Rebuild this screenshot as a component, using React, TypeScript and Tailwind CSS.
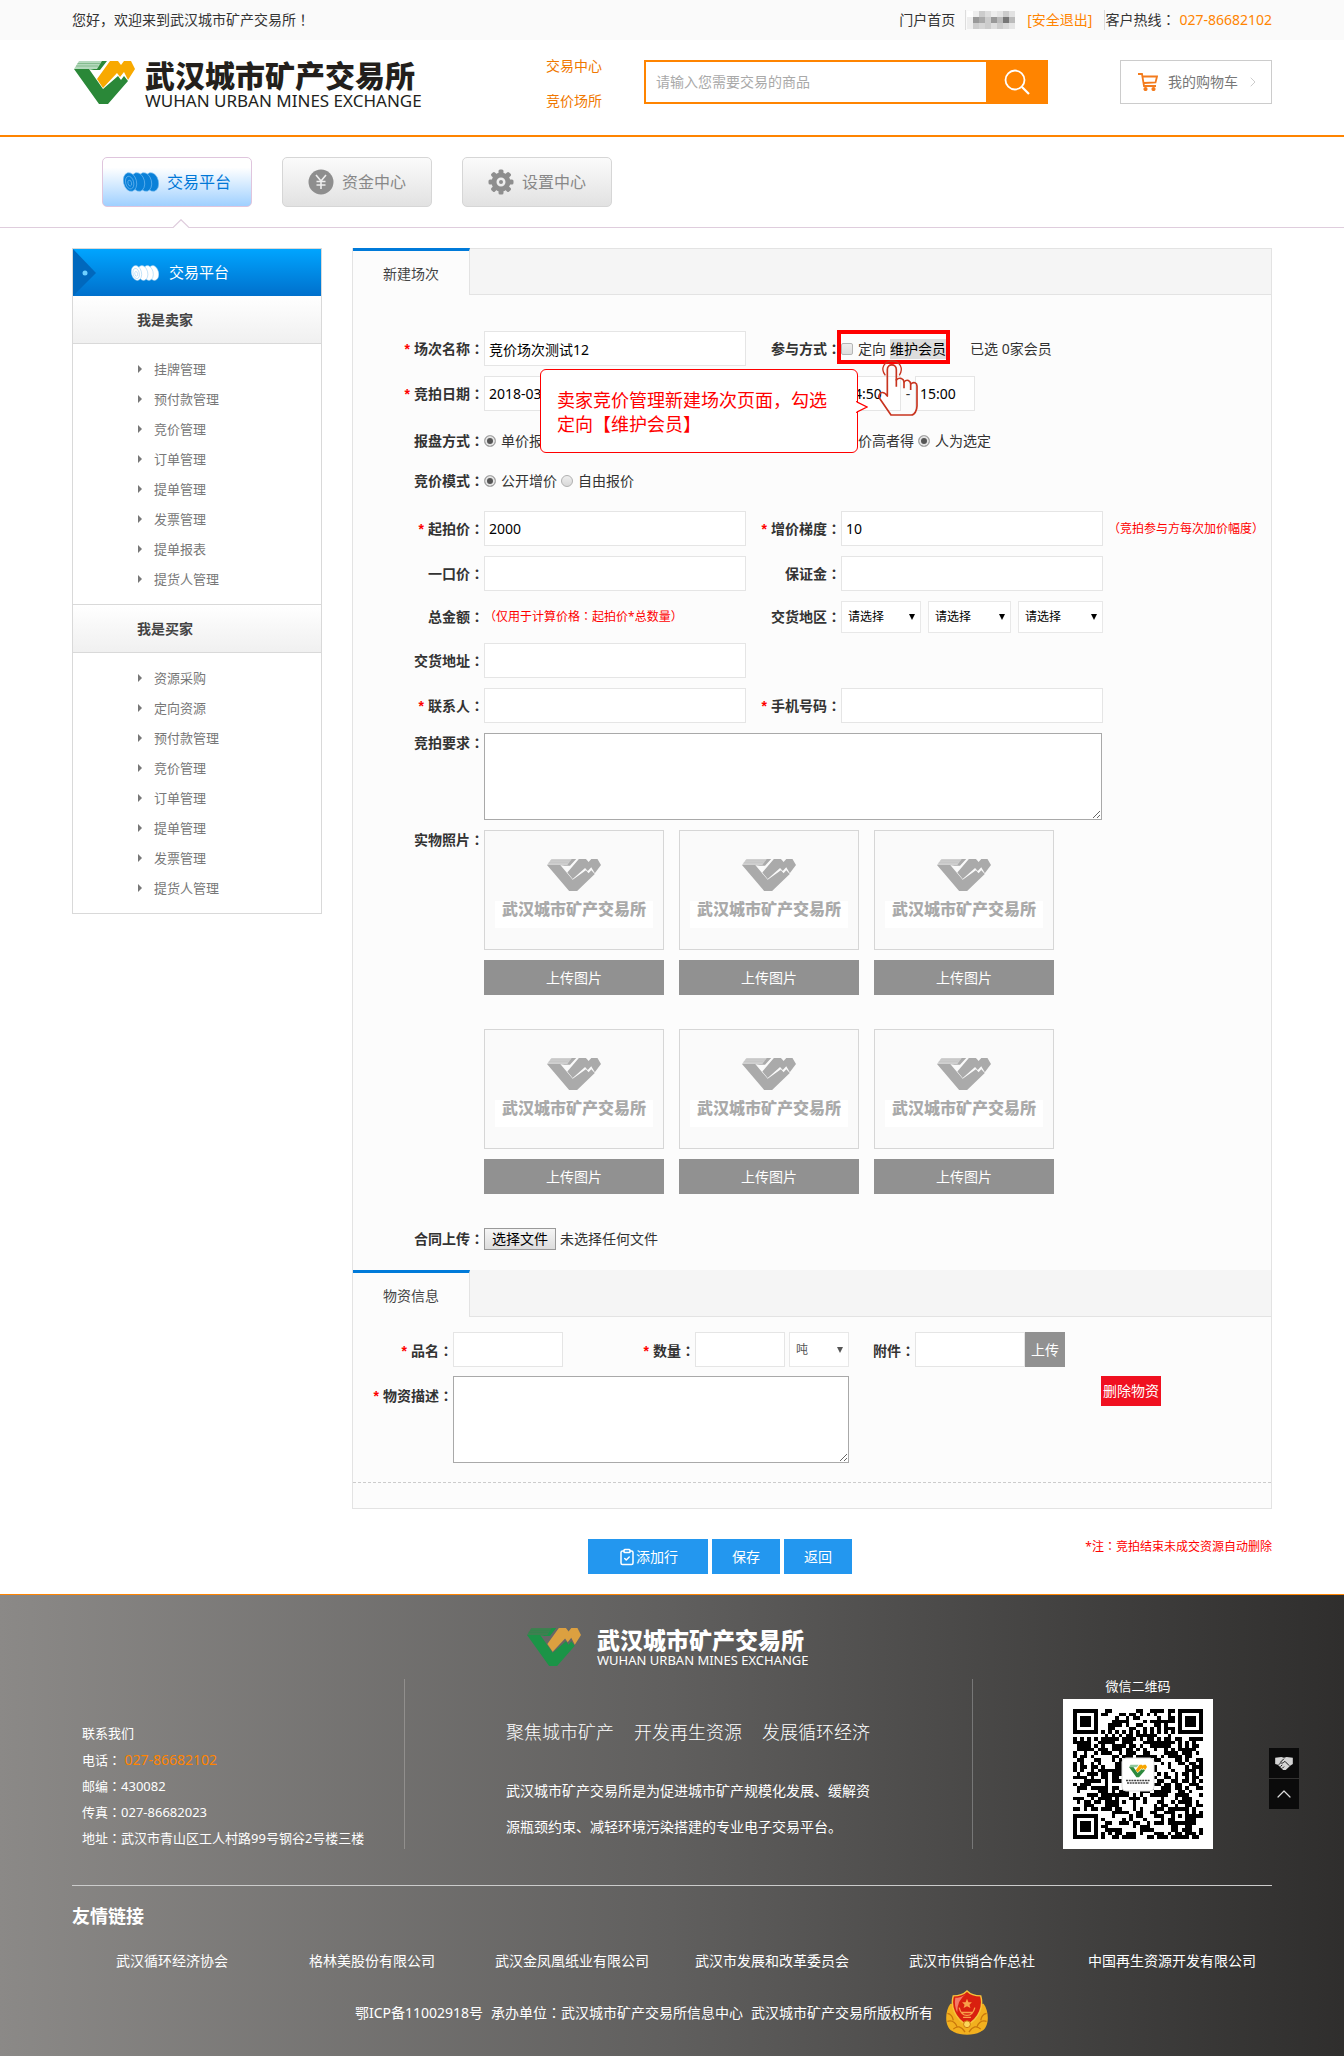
import { useState } from 'react';
import type { ReactNode } from 'react';
import { ChevronRight, ChevronUp, ClipboardCheck } from 'lucide-react';

const SELLER_MENU = ['挂牌管理', '预付款管理', '竞价管理', '订单管理', '提单管理', '发票管理', '提单报表', '提货人管理'];
const BUYER_MENU = ['资源采购', '定向资源', '预付款管理', '竞价管理', '订单管理', '提单管理', '发票管理', '提货人管理'];
const FRIEND_LINKS = [
    '武汉循环经济协会',
    '格林美股份有限公司',
    '武汉金凤凰纸业有限公司',
    '武汉市发展和改革委员会',
    '武汉市供销合作总社',
    '中国再生资源开发有限公司',
];

const inputClass = 'h-[35px] w-full border border-[#e5e5e5] bg-white px-1 text-sm text-black outline-none';
const rowClass = 'mb-2.5 grid grid-cols-[131px_262px_95px_262px_1fr] items-center';
const radioClass =
    'size-3 shrink-0 appearance-none rounded-full border border-[#b0b0b0] bg-linear-to-b from-[#eee] to-[#d8d8d8] checked:bg-none checked:bg-[#555] checked:shadow-[inset_0_0_0_2px_#e4e4e4]';

/* ---------- drawings ---------- */

const LogoMark = ({ className, green, light, gold }: { className: string; green: string; light: string; gold: string }) => (
    <svg viewBox="0 0 61 43" preserveAspectRatio="none" className={className} aria-hidden="true">
        <path d="M0 8H15L29 28L44 15L47 19L50 15L54 20L34 43H25Z" fill={green} />
        <path d="M26 0H33L26 9H14L20 8Z" fill={green} />
        <path d="M5 0H28L23 8H0Z" fill={light} />
        <path d="M3.500 2.500H26M2 5H24" stroke={green} strokeWidth="0.700" opacity="0.500" />
        <path d="M36 0H44L47 4L50 0H57L61 8L54 19L50 11L46 16L43 12L29 27L23 18Z" fill={gold} />
    </svg>
);

const CoilIcon = ({ className, color, line }: { className: string; color: string; line: string }) => (
    <svg viewBox="0 0 36 20" preserveAspectRatio="none" className={className} aria-hidden="true">
        {[29, 22, 15, 7].map((x) => (
            <g key={x} transform={`rotate(-14 ${x} 10)`}>
                <ellipse cx={x} cy="10" rx="6.500" ry="9.500" fill={color} stroke={line} strokeWidth="0.600" />
            </g>
        ))}
        <g transform="rotate(-14 7 10)" fill="none" stroke={line} strokeWidth="0.600">
            <ellipse cx="6.500" cy="10.500" rx="4" ry="6.500" />
            <ellipse cx="6.500" cy="11" rx="1.800" ry="3" />
        </g>
    </svg>
);

const GearIcon = () => (
    <svg viewBox="0 0 26 26" className="size-6.5" aria-hidden="true">
        {[0, 45, 90, 135, 180, 225, 270, 315].map((a) => (
            <rect key={a} x="10.500" y="0.500" width="5" height="6" rx="1.500" fill="#8e8e8e" transform={`rotate(${a} 13 13)`} />
        ))}
        <circle cx="13" cy="13" r="7" fill="none" stroke="#8e8e8e" strokeWidth="5" />
        <circle cx="13" cy="13" r="2" fill="#8e8e8e" />
    </svg>
);

const YuanIcon = () => (
    <svg viewBox="0 0 26 26" className="size-6.5" aria-hidden="true">
        <circle cx="13" cy="13" r="12.500" fill="#8e8e8e" />
        <path d="M8 6L13 12L18 6M13 12V20M8.500 12.500H17.500M8.500 16H17.500" fill="none" stroke="#eee" strokeWidth="1.600" />
    </svg>
);

const CartIcon = () => (
    <svg viewBox="0 0 20 18" className="h-[18px] w-5" fill="none" stroke="#f37b1d" strokeWidth="1.800" aria-hidden="true">
        <path d="M0 1H4L6 13H18M4.500 3.500H19L17.500 9.500L6 10" />
        <circle cx="7.500" cy="16" r="1.200" fill="#f37b1d" />
        <circle cx="15.500" cy="16" r="1.200" fill="#f37b1d" />
    </svg>
);

const HandIcon = ({ className }: { className: string }) => (
    <svg viewBox="232 180 126 171" className={className} fill="none" stroke="#c8341f" strokeWidth="5" aria-hidden="true">
        <path
            d="M263 288V209C263 190 290 190 290 209V240C300 230 312 236 313 246C322 236 332 242 333 252C342 244 352 248 352 258V318C352 330 345 345 335 345H274L237 291C240 275 252 272 263 288Z"
            strokeLinejoin="round"
        />
        <path d="M290 238V260M313 246V265M333 252V270" />
        <path d="M257 226C240 205 255 183 277 183C300 183 313 205 299 226" strokeWidth="4" />
    </svg>
);

const HandshakeIcon = () => (
    <svg viewBox="0 0 20 17" className="h-[15px] w-[18px]" aria-hidden="true">
        <path d="M0 2L7 1L10 2L13 1L20 2V9L17 11L12 16L9 16L3 10L0 9Z" fill="#d4d4d4" />
        <path d="M10 3L6 7C7 9 9 8 11 6L16 11M4 10L6 8M6 12L8 10M8 14L10 12" fill="none" stroke="#111" strokeWidth="1.100" />
    </svg>
);

const QR_SIZE = 37;

const isFinder = (x: number, y: number) => (x < 8 && y < 8) || (x > 28 && y < 8) || (x < 8 && y > 28);

const buildQr = () => {
    let seed = 20180315;
    let d = '';
    for (let y = 0; y < QR_SIZE; y++) {
        for (let x = 0; x < QR_SIZE; x++) {
            seed = (seed * 1103515245 + 12345) % 2147483648;
            const ring = Math.max(Math.abs(x - 30), Math.abs(y - 30));
            const timing = x === 6 || y === 6;
            let dark = seed / 2147483648 > 0.5;
            if (timing) dark = (x + y) % 2 === 0;
            if (ring <= 2) dark = ring !== 1;
            if (dark && !isFinder(x, y)) d += `M${x} ${y}h1v1h-1z`;
        }
    }
    return d;
};

const QrCode = () => (
    <svg viewBox="0 0 150 150" className="size-[150px]" role="img" aria-label="微信二维码">
        <rect width="150" height="150" fill="#fff" />
        <g transform="translate(10 10) scale(3.510)" shapeRendering="crispEdges">
            <path d={buildQr()} />
            {[[0, 0], [30, 0], [0, 30]].map(([x, y]) => (
                <g key={`${x}-${y}`}>
                    <rect x={x} y={y} width="7" height="7" />
                    <rect x={x + 1} y={y + 1} width="5" height="5" fill="#fff" />
                    <rect x={x + 2} y={y + 2} width="3" height="3" />
                </g>
            ))}
        </g>
        <rect x="59" y="59" width="32" height="33" rx="4" fill="#fff" stroke="#ddd" />
        <svg x="66" y="65" width="18" height="14" viewBox="0 0 61 43">
            <path d="M0 8H15L29 28L44 15L47 19L50 15L54 20L34 43H25Z" fill="#2d8a3e" />
            <path d="M5 0H33L26 9H0Z" fill="#8fc79c" />
            <path d="M36 0H44L47 4L50 0H57L61 8L54 19L50 11L46 16L43 12L29 27L23 18Z" fill="#f7a600" />
        </svg>
        <path d="M63 81.500H87M64 84H86" stroke="#444" strokeWidth="1.500" strokeDasharray="2 0.700" />
    </svg>
);

const PoliceBadge = () => (
    <svg viewBox="0 0 44 46" className="h-[45px] w-11" aria-hidden="true">
        <path d="M5 14C-1 22 -1 38 7 42C14 47 30 47 37 42C45 38 45 22 39 14Z" fill="#f2b01e" />
        <path d="M2 24Q7 25 8 31M2 32Q9 30 12 38M42 24Q37 25 36 31M42 32Q35 30 32 38M8 40Q14 34 20 43M36 40Q30 34 24 43" fill="none" stroke="#c9770b" strokeWidth="1.300" />
        <path d="M22 1C18 5 12 6 8 6C5 16 9 29 22 36C35 29 39 16 36 6C32 6 26 5 22 1Z" fill="#d9200f" stroke="#f6c33c" strokeWidth="1.500" />
        <path d="M21 4C18 7 13 8 10 8C9 14 10 19 12 23Q12 10 21 4Z" fill="#f47a66" />
        <path d="M22 9L23.500 12.500H27L24.500 15L25.500 18.500L22 16.500L18.500 18.500L19.500 15L17 12.500H20.500Z" fill="#f9a04a" />
        <path d="M14 18Q16 26 22 26Q28 26 30 18M16 23H28M18 28H26" fill="none" stroke="#f9a04a" strokeWidth="1.300" />
        <circle cx="22" cy="35" r="3.500" fill="#fbd75a" stroke="#c9770b" />
    </svg>
);

const MOSAIC = ['#fff', '#eee', '#ccc', '#ddd', '#eee', '#e5e5e5', '#ccc', '#e2e2e2', '#eee', '#999', '#aaa', '#ccc', '#999', '#bbb', '#777', '#bbb', '#eee', '#ccc', '#d5d5d5', '#ccc', '#ddd', '#ccc', '#d8d8d8', '#e5e5e5'];

const MaskedName = () => (
    <svg viewBox="0 0 48 18" className="h-[18px] w-12" aria-hidden="true" shapeRendering="crispEdges">
        {MOSAIC.map((c, i) => (
            <rect key={i} x={(i % 8) * 6} y={Math.floor(i / 8) * 6} width="6" height="6" fill={c} />
        ))}
    </svg>
);

/* ---------- small pieces ---------- */

// full-width punctuation that sits in the middle of its cell
const Mark = ({ children }: { children: string }) => (
    <span className="font-[family-name:'Noto_Sans_CJK_TC',sans-serif] leading-none">{children}</span>
);

const Label = ({ htmlFor, required, children, className = '' }: { htmlFor?: string; required?: boolean; children: ReactNode; className?: string }) => (
    <label htmlFor={htmlFor} className={`flex justify-end text-sm leading-5 font-bold whitespace-nowrap text-[#333] ${className}`}>
        {required && <span className="mr-1 font-[family-name:'Liberation_Sans',sans-serif] text-[#f00]">*</span>}
        <span>
            {children}
            <Mark>：</Mark>
        </span>
    </label>
);

const Select = ({ label, options, className }: { label: string; options: string[]; className: string }) => (
    <span className={`relative block ${className}`}>
        <select aria-label={label} className="h-full w-full appearance-none border border-[#e8e8e8] bg-white pl-1.5 text-xs outline-none">
            {options.map((o) => (
                <option key={o}>{o}</option>
            ))}
        </select>
        <svg viewBox="0 0 6 6" className="pointer-events-none absolute top-1/2 right-1.5 size-1.5 -translate-y-1/2" aria-hidden="true">
            <path d="M0 0H6L3 6Z" fill="currentColor" />
        </svg>
    </span>
);

const Radio = ({ name, label, checked }: { name: string; label: string; checked?: boolean }) => (
    <label className="mr-1 flex items-center gap-[5px] text-sm whitespace-nowrap">
        <input type="radio" name={name} defaultChecked={checked} className={radioClass} />
        {label}
    </label>
);

const SideMenu = ({ title, items }: { title: string; items: string[] }) => (
    <section className="border-b border-[#d9d9d9]">
        <h3 className="border-b border-[#d9d9d9] bg-linear-to-b from-white to-[#f0f0f0] pl-16 text-sm leading-[47px] font-bold text-[#444]">{title}</h3>
        <ul className="py-2.5">
            {items.map((item) => (
                <li key={item}>
                    <a href="#" className="flex h-[30px] items-center gap-3 pl-[65px] text-[13px] text-[#777]">
                        <svg viewBox="0 0 4 8" className="h-2 w-1" aria-hidden="true">
                            <path d="M0 0L4 4L0 8Z" fill="#777" />
                        </svg>
                        {item}
                    </a>
                </li>
            ))}
        </ul>
    </section>
);

const SectionTab = ({ title, className = '' }: { title: string; className?: string }) => (
    <div className="flex h-[47px]">
        <h2 className="w-[117px] border-t-[3px] border-r border-t-[#007ad9] border-r-[#e3e3e3] pl-[30px] text-sm leading-[46px] text-[#444]">{title}</h2>
        <div className={`flex-1 border-b border-[#e3e3e3] bg-[#f5f5f5] ${className}`} />
    </div>
);

const PhotoSlot = () => (
    <div className="w-[180px]">
        <div className="flex h-[120px] flex-col items-center border border-[#d6d6d6] bg-[#fafafa] pt-7">
            <LogoMark className="h-8 w-[54px]" green="#aaa" light="#d0d0d0" gold="#aaa" />
            <div className="mt-2.5 h-[27px] w-[158px] bg-white text-center text-base leading-4 font-black text-[#aaa]">武汉城市矿产交易所</div>
        </div>
        <button type="button" className="mt-2.5 h-[35px] w-full bg-[#919191] text-sm text-white">
            上传图片
        </button>
    </div>
);

const Field = ({ id, value }: { id: string; value?: string }) => <input id={id} name={id} type="text" defaultValue={value} className={inputClass} />;

/* ---------- page parts ---------- */

const Header = () => (
    <header>
        <div className="bg-[#fafafa]">
            <div className="mx-auto flex h-10 max-w-[1200px] items-center text-sm text-[#333]">
                <span className="leading-5">
                    您好，欢迎来到武汉城市矿产交易所<Mark>！</Mark>
                </span>
                <a href="#" className="mr-2.5 ml-auto">门户首页</a>
                <span className="flex h-5 items-center border-l border-[#ddd] pl-px">
                    <MaskedName />
                </span>
                <a href="#" className="mx-3 text-[#ff8400]">[安全退出]</a>
                <span className="mr-1 border-l border-[#ddd] leading-5">
                    客户热线<Mark>：</Mark>
                </span>
                <span className="text-[#ff8400]">027-86682102</span>
            </div>
        </div>
        <div className="border-b-2 border-[#ff8400]">
            <div className="mx-auto flex h-[95px] max-w-[1200px] items-start pt-5">
                <a href="#" className="ml-0.5 flex w-[472px] shrink-0 items-start gap-2.5">
                    <LogoMark className="mt-px h-[43px] w-[61px]" green="#2a8838" light="#b5d9bd" gold="#f8a900" />
                    <span className="block text-[#231f1c]">
                        <span className="block text-[30px] leading-8 font-black">武汉城市矿产交易所</span>
                        <span className="block text-[17px] leading-[18px]">WUHAN URBAN MINES EXCHANGE</span>
                    </span>
                </a>
                <nav className="flex w-[98px] shrink-0 flex-col gap-[11px] text-sm leading-6 text-[#f07800]">
                    <a href="#" className="-mt-1.5">交易中心</a>
                    <a href="#">竞价场所</a>
                </nav>
                <form className="flex h-11 w-[404px]" onSubmit={(e) => e.preventDefault()}>
                    <input
                        type="text"
                        aria-label="搜索商品"
                        placeholder="请输入您需要交易的商品"
                        className="min-w-0 flex-1 border-2 border-r-0 border-[#ff8400] px-2.5 text-sm outline-none placeholder:text-[#a9a9a9]"
                    />
                    <button type="submit" aria-label="搜索" className="flex w-[62px] items-center justify-center bg-[#ff8400]">
                        <svg viewBox="0 0 26 26" className="size-6.5" fill="none" stroke="#fff" strokeWidth="1.800" aria-hidden="true">
                            <circle cx="11" cy="11" r="9.500" />
                            <path d="M18 18L25 25" strokeWidth="2.200" />
                        </svg>
                    </button>
                </form>
                <a href="#" className="ml-auto flex h-11 w-[152px] items-center border border-[#ccc] pr-2.5 pl-[17px] text-sm text-[#777]">
                    <CartIcon />
                    <span className="ml-2.5">我的购物车</span>
                    <ChevronRight className="ml-auto size-4 text-[#ccc]" strokeWidth={1.5} />
                </a>
            </div>
        </div>
    </header>
);

const CenterTabs = () => (
    <nav className="border-b border-[#dfcddd]">
        <div className="relative mx-auto flex max-w-[1200px] gap-[30px] px-[30px] py-5 text-base">
            <a href="#" className="flex h-[50px] w-[150px] items-center gap-2 rounded-[5px] border border-[#dfc5dd] bg-linear-to-b from-white from-20% to-[#9fd0ff] pl-5 text-[#0078d7]">
                <CoilIcon className="h-5 w-9" color="#0a80d8" line="#7cc0f2" />
                交易平台
            </a>
            <a href="#" className="flex h-[50px] w-[150px] items-center gap-2 rounded-[5px] border border-[#d6d6d6] bg-linear-to-b from-[#fbfbfb] to-[#e2e2e2] pl-[25px] text-[#888]">
                <YuanIcon />
                资金中心
            </a>
            <a href="#" className="flex h-[50px] w-[150px] items-center gap-2 rounded-[5px] border border-[#d6d6d6] bg-linear-to-b from-[#fbfbfb] to-[#e2e2e2] pl-[25px] text-[#888]">
                <GearIcon />
                设置中心
            </a>
            <svg viewBox="0 0 16 9" className="absolute -bottom-px left-[101px] h-[9px] w-4" aria-hidden="true">
                <path d="M0 9L8 1L16 9Z" fill="#fff" />
                <path d="M0 8.500L8 0.700L16 8.500" fill="none" stroke="#dfcddd" strokeWidth="1.200" />
            </svg>
        </div>
    </nav>
);

const Sidebar = () => (
    <aside className="w-[250px] shrink-0 self-start border-x border-t border-[#d9d9d9]">
        <h2 className="flex h-[47px] items-center bg-linear-to-b from-[#00a5ff] to-[#0070cc] text-[15px] text-white">
            <svg viewBox="0 0 23 47" className="h-[47px] w-[23px]" aria-hidden="true">
                <path d="M0 0L23 24L0 47Z" fill="#0068bd" />
                <circle cx="12" cy="24" r="2.500" fill="#6fd0ff" />
            </svg>
            <CoilIcon className="mr-2.5 ml-[35px] h-4 w-7" color="#fff" line="#8cc8f2" />
            交易平台
        </h2>
        <SideMenu title="我是卖家" items={SELLER_MENU} />
        <SideMenu title="我是买家" items={BUYER_MENU} />
    </aside>
);

const SessionForm = () => {
    const [directed, setDirected] = useState(false);

    return (
        <div className="relative pt-9 pb-5">
            <div className={rowClass}>
                <Label htmlFor="sessionName" required>场次名称</Label>
                <Field id="sessionName" value="竞价场次测试12" />
                <Label>参与方式</Label>
                <div className="relative col-span-2 flex h-[35px] items-center text-sm">
                    <span className="pointer-events-none absolute -top-px -left-1 h-[34px] w-[113px] border-4 border-[#f00]" />
                    <label className="flex w-[49px] items-center gap-[5px]">
                        <input
                            type="checkbox"
                            checked={directed}
                            onChange={(e) => setDirected(e.target.checked)}
                            className="size-3 appearance-none rounded-[2px] border border-[#b5b5b5] bg-linear-to-b from-[#eee] to-[#ddd] checked:bg-[#888] checked:bg-none"
                        />
                        定向
                    </label>
                    <button type="button" className="h-5 w-14 bg-[#ddd] leading-5 whitespace-nowrap text-black">维护会员</button>
                    <span className="ml-6">已选 0家会员</span>
                </div>
            </div>

            <div className={rowClass}>
                <Label htmlFor="auctionDate" required>竞拍日期</Label>
                <Field id="auctionDate" value="2018-03-15" />
                <span />
                <div className="flex items-center text-sm">
                    <input type="text" aria-label="开始时间" defaultValue="14:50" className="h-[35px] w-[60px] border border-[#e5e5e5] bg-white px-1 text-black" />
                    <span className="w-3.5 text-center">-</span>
                    <input type="text" aria-label="结束时间" defaultValue="15:00" className="h-[35px] w-[60px] border border-[#e5e5e5] bg-white px-1 text-black" />
                </div>
            </div>

            <div className="grid h-10 grid-cols-[131px_262px_95px_262px_1fr] items-center">
                <Label>报盘方式</Label>
                <div className="flex">
                    <Radio name="quote" label="单价报盘" checked />
                </div>
                <span />
                <div className="flex">
                    <Radio name="winner" label="价高者得" />
                    <Radio name="winner" label="人为选定" checked />
                </div>
            </div>

            <div className="mb-2.5 grid h-10 grid-cols-[131px_1fr] items-center">
                <Label>竞价模式</Label>
                <div className="flex">
                    <Radio name="mode" label="公开增价" checked />
                    <Radio name="mode" label="自由报价" />
                </div>
            </div>

            <div className={rowClass}>
                <Label htmlFor="startPrice" required>起拍价</Label>
                <Field id="startPrice" value="2000" />
                <Label htmlFor="step" required>增价梯度</Label>
                <Field id="step" value="10" />
                <span className="pl-[5px] text-xs whitespace-nowrap text-[#f00]">（竞拍参与方每次加价幅度）</span>
            </div>

            <div className={rowClass}>
                <Label htmlFor="fixedPrice">一口价</Label>
                <Field id="fixedPrice" />
                <Label htmlFor="deposit">保证金</Label>
                <Field id="deposit" />
            </div>

            <div className={rowClass}>
                <Label>总金额</Label>
                <span className="text-xs text-[#f00]">
                    （仅用于计算价格<Mark>：</Mark>起拍价*总数量）
                </span>
                <Label>交货地区</Label>
                <div className="flex h-8 justify-between text-black">
                    <Select label="省" options={['请选择']} className="w-20" />
                    <Select label="市" options={['请选择']} className="w-[83px]" />
                    <Select label="区" options={['请选择']} className="w-[85px]" />
                </div>
            </div>

            <div className={rowClass}>
                <Label htmlFor="address">交货地址</Label>
                <Field id="address" />
            </div>

            <div className={rowClass}>
                <Label htmlFor="contact" required>联系人</Label>
                <Field id="contact" />
                <Label htmlFor="mobile" required>手机号码</Label>
                <Field id="mobile" />
            </div>

            <div className="mb-2.5 flex">
                <Label htmlFor="demand" className="w-[131px]">竞拍要求</Label>
                <textarea id="demand" className="h-[87px] w-[618px] border border-[#a9a9a9] bg-white outline-none" />
            </div>

            <div className="flex">
                <Label className="w-[131px] self-start">实物照片</Label>
                <div className="grid grid-cols-[180px_180px_180px] gap-x-[15px] gap-y-[34px]">
                    {[0, 1, 2, 3, 4, 5].map((n) => (
                        <PhotoSlot key={n} />
                    ))}
                </div>
            </div>

            <div className="mt-[34px] flex items-center text-sm">
                <Label htmlFor="contract" className="w-[131px]">合同上传</Label>
                <input id="contract" type="file" className="hidden" />
                <label htmlFor="contract" className="h-[22px] w-[72px] border border-[#999] bg-linear-to-b from-[#f5f5f5] to-[#ddd] text-center leading-5 text-black">
                    选择文件
                </label>
                <span className="ml-1">未选择任何文件</span>
            </div>

            {/* guide callout laid over the form */}
            <div className="absolute top-[74px] left-[187px] h-[84px] w-[318px] rounded-md border border-[#f00] bg-white pt-[18px] pl-4 text-lg leading-6 whitespace-nowrap text-[#f00]">
                卖家竞价管理新建场次页面，勾选
                <br />
                定向【维护会员】
                <svg viewBox="0 0 12 12" className="absolute top-[31px] -right-[11px] size-3" aria-hidden="true">
                    <path d="M0 0.500L11 6L0 11.500" fill="#fff" stroke="#f00" strokeWidth="1.300" />
                    <path d="M0 1.500V10.500" stroke="#fff" strokeWidth="2" />
                </svg>
            </div>
            <HandIcon className="absolute top-[65px] left-[524px] h-[57px] w-[42px]" />
        </div>
    );
};

const GoodsForm = () => (
    <div className="pt-[15px] pb-[25px]">
        <div className="flex items-center">
            <Label htmlFor="goodsName" required className="w-[100px] pt-0.5">品名</Label>
            <div className="w-[110px]">
                <Field id="goodsName" />
            </div>
            <Label htmlFor="quantity" required className="w-[132px] pt-0.5">数量</Label>
            <div className="w-[90px]">
                <Field id="quantity" />
            </div>
            <Select label="单位" options={['吨']} className="ml-1 h-[35px] w-[60px] text-[#555]" />
            <Label htmlFor="attachment" className="w-[66px] pt-0.5">附件</Label>
            <div className="w-[110px]">
                <Field id="attachment" />
            </div>
            <button type="button" className="h-[35px] w-10 bg-[#919191] text-sm text-white">上传</button>
        </div>
        <div className="mt-[9px] flex items-start border-b border-dashed border-[#ccc] pb-[19px]">
            <Label htmlFor="goodsDesc" required className="w-[100px] pt-2.5">物资描述</Label>
            <textarea id="goodsDesc" className="h-[87px] w-[396px] border border-[#a9a9a9] bg-white outline-none" />
            <button type="button" className="ml-[252px] h-[30px] w-[60px] bg-[#f01020] text-sm whitespace-nowrap text-white">删除物资</button>
        </div>
    </div>
);

const Footer = () => (
    <footer className="border-t border-[#ff8400] bg-linear-to-r from-[#8b8987] via-[#605f5e] to-[#2f2e2d] text-white">
        <div className="mx-auto max-w-[1200px] pt-[33px] pb-[21px]">
            <div className="flex h-[39px] gap-4 pl-[455px]">
                <LogoMark className="h-[38px] w-[54px]" green="#1b9447" light="#3f7f50" gold="#dca040" />
                <div>
                    <div className="text-[23px] leading-6 font-black">武汉城市矿产交易所</div>
                    <div className="text-[13px] leading-4">WUHAN URBAN MINES EXCHANGE</div>
                </div>
            </div>

            <div className="mt-3 flex h-[170px]">
                <address className="w-[333px] border-r border-[#918f8d] pt-10 pl-2.5 text-[13px] whitespace-nowrap not-italic">
                    <p className="h-7 leading-7">联系我们</p>
                    <p className="h-[26px] leading-[26px]">
                        电话<Mark>：</Mark> <span className="text-sm leading-none text-[#ff8400]">027-86682102</span>
                    </p>
                    <p className="h-[26px] leading-[26px]">邮编<Mark>：</Mark>430082</p>
                    <p className="h-[26px] leading-[26px]">传真<Mark>：</Mark>027-86682023</p>
                    <p className="h-[26px] leading-[26px]">地址<Mark>：</Mark>武汉市青山区工人村路99号钢谷2号楼三楼</p>
                </address>
                <div className="w-[568px] border-r border-[#777] pt-[35px] pl-[101px]">
                    <p className="flex gap-5 text-lg leading-9 font-light">
                        <span>聚焦城市矿产</span>
                        <span>开发再生资源</span>
                        <span>发展循环经济</span>
                    </p>
                    <p className="mt-[23px] w-[370px] text-sm leading-9">武汉城市矿产交易所是为促进城市矿产规模化发展、缓解资源瓶颈约束、减轻环境污染搭建的专业电子交易平台。</p>
                </div>
                <div className="ml-[90px] w-[150px] text-center">
                    <p className="mb-1.5 text-[13px] leading-3.5">微信二维码</p>
                    <QrCode />
                </div>
            </div>

            <h3 className="mt-9 border-t border-[#ccc] pt-4 text-lg leading-7 font-bold">友情链接</h3>
            <div className="mt-[19px] grid grid-cols-6 text-center text-sm leading-6">
                {FRIEND_LINKS.map((name) => (
                    <a key={name} href="#">{name}</a>
                ))}
            </div>
            <div className="mt-[17px] flex items-center justify-center text-sm">
                <span className="mr-2">鄂ICP备11002918号</span>
                <span className="mr-2">
                    承办单位<Mark>：</Mark>武汉城市矿产交易所信息中心
                </span>
                <span className="mr-3">武汉城市矿产交易所版权所有</span>
                <PoliceBadge />
            </div>
        </div>
    </footer>
);

const App = () => (
    <div className="min-w-[1200px] bg-white font-[family-name:'Noto_Sans','Noto_Sans_CJK_SC',sans-serif] text-sm text-[#333]">
        <Header />
        <CenterTabs />

        <div className="mx-auto flex max-w-[1200px] gap-[30px] pt-5 pb-5">
            <Sidebar />
            <main className="min-w-0 flex-1">
                <div className="border-x border-b border-[#e3e3e3] bg-[#fcfcfc]">
                    <SectionTab title="新建场次" className="border-t" />
                    <SessionForm />
                    <SectionTab title="物资信息" />
                    <GoodsForm />
                </div>
                <div className="mt-[30px] flex items-start pl-[236px]">
                    <div className="flex gap-1 text-sm text-white">
                        <button type="button" className="flex h-[35px] w-[120px] items-center justify-center bg-[#2397ef]">
                            <ClipboardCheck className="size-[18px]" strokeWidth={2} />
                            添加行
                        </button>
                        <button type="button" className="h-[35px] w-[68px] bg-[#2397ef]">保存</button>
                        <button type="button" className="h-[35px] w-[68px] bg-[#2397ef]">返回</button>
                    </div>
                    <p className="ml-auto text-xs leading-4 text-[#f00]">
                        *注<Mark>：</Mark>竞拍结束未成交资源自动删除
                    </p>
                </div>
            </main>
        </div>

        <Footer />

        <div className="fixed right-[45px] bottom-[247px] flex flex-col gap-px">
            <a href="#" aria-label="合作" className="flex size-[30px] items-center justify-center bg-[#0b0b0b]">
                <HandshakeIcon />
            </a>
            <button type="button" aria-label="返回顶部" className="flex size-[30px] items-center justify-center bg-[#0b0b0b] text-[#ddd]">
                <ChevronUp className="size-6" strokeWidth={1.2} />
            </button>
        </div>
    </div>
);

export default App;
